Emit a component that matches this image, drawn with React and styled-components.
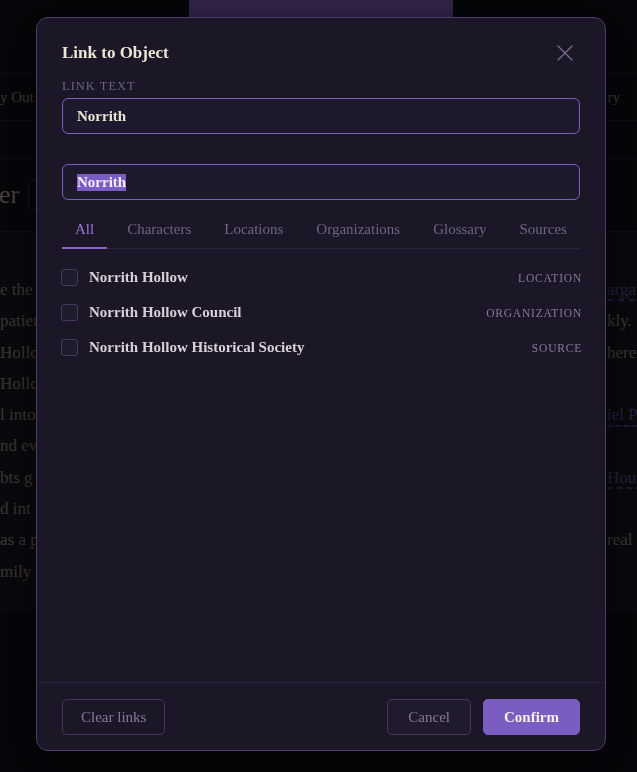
import React from 'react';
import styled, { createGlobalStyle } from 'styled-components';

const GlobalStyle = createGlobalStyle`
  html, body {
    margin: 0;
    padding: 0;
    background: #08070b;
    overflow: hidden;
  }
  body {
    font-family: 'Liberation Serif', 'DejaVu Serif', serif;
  }
`;

/* ---------- page behind the dialog ---------- */

const Page = styled.div`
  width: 637px;
  height: 772px;
  background: #08070b;
  overflow: hidden;
  color: #6f6858;
`;

const TopBar = styled.div`
  height: 74px;
  display: flex;
  padding-left: 189px;
  border-bottom: 1px solid #16141c;
  box-sizing: border-box;
`;

const SaveTab = styled.div`
  width: 264px;
  height: 48px;
  background: #4d376c;
  display: flex;
  align-items: flex-end;
  justify-content: center;
  padding-bottom: 14px;
  box-sizing: border-box;
  font-size: 15px;
  color: #b8b0c4;
`;

const NavRow = styled.div`
  height: 47px;
  display: flex;
  justify-content: space-between;
  align-items: center;
  border-bottom: 1px solid #16141c;
  box-sizing: border-box;
  font-size: 15px;
  color: #5c5648;
  white-space: nowrap;
`;

const NavRight = styled.span`
  margin-right: 17px;
`;

const ToolRow = styled.div`
  height: 38px;
  border-bottom: 1px solid #16141c;
  box-sizing: border-box;
`;

const HeadRow = styled.div`
  height: 73px;
  display: flex;
  align-items: center;
  gap: 9px;
  border-bottom: 1px solid #16141c;
  box-sizing: border-box;
  white-space: nowrap;
`;

const HeadTitle = styled.span`
  font-size: 26px;
  color: #6a6456;
  margin-left: -1px;
`;

const HeadInput = styled.div`
  width: 120px;
  height: 28px;
  border: 1px solid #24212c;
  border-radius: 4px;
  flex: none;
`;

const Article = styled.div`
  background: #0d0c11;
  height: 379px;
  padding-top: 48px;
  box-sizing: border-box;
  font-size: 17px;
  color: #5a5446;
`;

const Line = styled.div`
  height: 31.3px;
  display: flex;
  justify-content: space-between;
  white-space: nowrap;
`;

const LineRight = styled.span`
  width: 30px;
  flex: none;
  overflow: hidden;
  ${(p) =>
    p.$link &&
    `
    color: #3a2f5e;
    text-decoration: underline dashed #3a2f5e;
    text-underline-offset: 5px;
  `}
`;

/* ---------- dialog ---------- */

const Backdrop = styled.div`
  position: fixed;
  inset: 0;
  background: rgba(6, 5, 10, 0.35);
  padding: 17px 0 0 36px;
  box-sizing: border-box;
`;

const Dialog = styled.div`
  width: 570px;
  height: 734px;
  background: #1b1726;
  border: 1px solid #4b3c6c;
  border-radius: 12px;
  box-sizing: border-box;
  display: flex;
  flex-direction: column;
  box-shadow: 0 10px 40px rgba(0, 0, 0, 0.6);
`;

const Body = styled.div`
  flex: 1;
  padding: 24px 25px 0 25px;
  display: flex;
  flex-direction: column;
`;

const Header = styled.div`
  display: flex;
  justify-content: space-between;
  align-items: center;
  height: 22px;
`;

const Title = styled.h2`
  margin: 0;
  font-size: 17px;
  font-weight: 600;
  color: #ebe3d3;
`;

const CloseButton = styled.button`
  background: none;
  border: none;
  padding: 0;
  width: 16px;
  height: 16px;
  display: flex;
  color: #7a7090;
  margin-right: 7px;
`;

const FieldLabel = styled.div`
  margin-top: 15px;
  font-size: 12.5px;
  letter-spacing: 1px;
  text-transform: uppercase;
  color: #6c6384;
`;

const Field = styled.div`
  margin-top: ${(p) => p.$gap || 0}px;
  height: 36px;
  border: 1px solid #7b5cc4;
  border-radius: 6px;
  background: #1e1a2e;
  display: flex;
  align-items: center;
  padding: 0 14px;
  box-sizing: border-box;
  font-size: 15px;
  font-weight: 700;
  color: #ece4d4;
`;

const Selected = styled.span`
  background: #7b5cc4;
  color: #f3eefa;
`;

const Tabs = styled.div`
  margin-top: 12px;
  display: flex;
  justify-content: space-between;
  border-bottom: 1px solid #2a2438;
`;

const Tab = styled.button`
  background: none;
  border: none;
  padding: 9px 13px 11px;
  font-family: inherit;
  font-size: 15px;
  color: ${(p) => (p.$active ? '#9a78dc' : '#6e6586')};
  box-shadow: ${(p) => (p.$active ? 'inset 0 -2px 0 #8a66d4' : 'none')};
  margin-bottom: -1px;
`;

const List = styled.div`
  margin-top: 11px;
  display: flex;
  flex-direction: column;
`;

const Row = styled.div`
  height: 35px;
  display: flex;
  align-items: center;
  gap: 11px;
  margin-right: -2px;
`;

const Check = styled.span`
  width: 17px;
  height: 17px;
  border: 1.5px solid #45395f;
  border-radius: 3px;
  background: #1e1b2c;
  box-sizing: border-box;
  flex: none;
  margin-left: -1px;
`;

const RowName = styled.span`
  flex: 1;
  font-size: 15px;
  font-weight: 600;
  color: #d8cfd8;
`;

const RowKind = styled.span`
  font-size: 11.5px;
  letter-spacing: 0.8px;
  text-transform: uppercase;
  color: #857b96;
`;

const Footer = styled.div`
  border-top: 1px solid #2a2438;
  padding: 16px 25px 15px;
  display: flex;
  align-items: center;
  gap: 12px;
`;

const Button = styled.button`
  height: 36px;
  padding: 0 ${(p) => p.$pad || 16}px;
  border-radius: 5px;
  font-family: inherit;
  font-size: 15px;
  box-sizing: border-box;
  border: 1px solid ${(p) => (p.$primary ? '#7b5cc0' : '#43375e')};
  background: ${(p) => (p.$primary ? '#7b5cc0' : p.$tint ? '#1f1a2c' : 'transparent')};
  color: ${(p) => (p.$primary ? '#f5efe6' : '#857b98')};
  font-weight: ${(p) => (p.$primary ? 700 : 400)};
`;

const Spacer = styled.div`
  flex: 1;
`;

const CloseIcon = () => (
  <svg width="16" height="16" viewBox="0 0 16 16" fill="none" stroke="currentColor" strokeWidth="1.3" strokeLinecap="round">
    <path d="M1 1 L15 15 M15 1 L1 15" />
  </svg>
);

const lines = [
  ['e the', 'arga', true],
  ['patien', 'kly.', false],
  ['Hollo', 'here', false],
  ['Hollo', '', false],
  ['l into', 'iel P', true],
  ['nd ev', '', false],
  ['bts g', 'Hous', true],
  ['d int', '', false],
  ['as a p', 'real', false],
  ['mily', '', false],
];

const tabs = ['All', 'Characters', 'Locations', 'Organizations', 'Glossary', 'Sources'];

const results = [
  { name: 'Norrith Hollow', kind: 'Location' },
  { name: 'Norrith Hollow Council', kind: 'Organization' },
  { name: 'Norrith Hollow Historical Society', kind: 'Source' },
];

const App = () => (
  <>
    <GlobalStyle />
    <Page>
      <TopBar>
        <SaveTab>Save Edit</SaveTab>
      </TopBar>
      <NavRow>
        <span>y Out</span>
        <NavRight>ry</NavRight>
      </NavRow>
      <ToolRow />
      <HeadRow>
        <HeadTitle>er</HeadTitle>
        <HeadInput />
      </HeadRow>
      <Article>
        {lines.map(([l, r, link], i) => (
          <Line key={i}>
            <span>{l}</span>
            <LineRight $link={link}>{r}</LineRight>
          </Line>
        ))}
      </Article>
    </Page>

    <Backdrop>
      <Dialog>
        <Body>
          <Header>
            <Title>Link to Object</Title>
            <CloseButton aria-label="Close">
              <CloseIcon />
            </CloseButton>
          </Header>
          <FieldLabel>Link text</FieldLabel>
          <Field $gap={4}>Norrith</Field>
          <Field $gap={30}>
            <Selected>Norrith</Selected>
          </Field>
          <Tabs>
            {tabs.map((t, i) => (
              <Tab key={t} $active={i === 0}>
                {t}
              </Tab>
            ))}
          </Tabs>
          <List>
            {results.map((r) => (
              <Row key={r.name}>
                <Check />
                <RowName>{r.name}</RowName>
                <RowKind>{r.kind}</RowKind>
              </Row>
            ))}
          </List>
        </Body>
        <Footer>
          <Button $pad={18}>Clear links</Button>
          <Spacer />
          <Button $tint $pad={20}>Cancel</Button>
          <Button $primary $pad={20}>Confirm</Button>
        </Footer>
      </Dialog>
    </Backdrop>
  </>
);

export default App;
